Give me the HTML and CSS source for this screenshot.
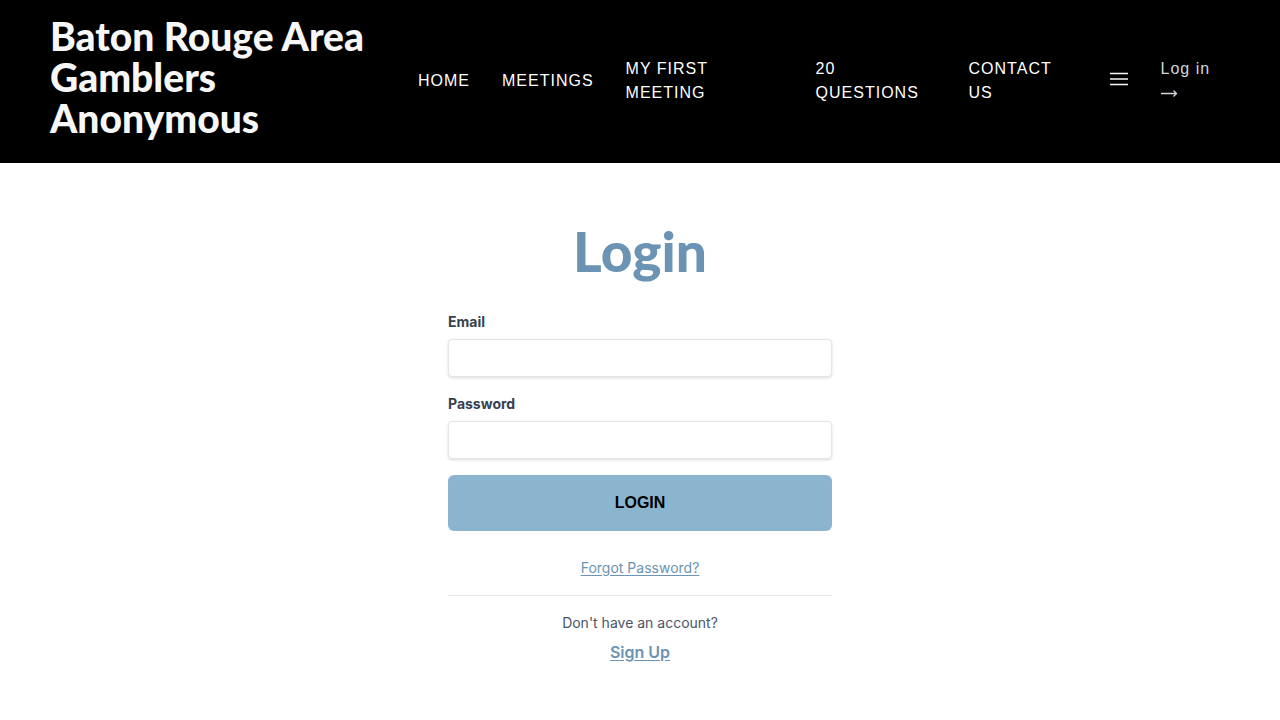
FILE: index.html
```html
<!DOCTYPE html>
<html lang="en">
<head>
<meta charset="utf-8">
<meta name="viewport" content="width=device-width, initial-scale=1">
<title>Login</title>
<link rel="stylesheet" href="styles.css">
</head>
<body>
<header class="header">
  <a class="brand" href="#">Baton Rouge Area Gamblers Anonymous</a>
  <nav class="nav">
    <a class="nav-link" href="#">HOME</a>
    <a class="nav-link" href="#">MEETINGS</a>
    <a class="nav-link nav-wide" href="#">MY FIRST MEETING</a>
    <a class="nav-link nav-medium" href="#">20 QUESTIONS</a>
    <a class="nav-link nav-narrow" href="#">CONTACT US</a>
    <button class="menu" type="button" aria-label="More pages">
      <svg width="20" height="14" viewBox="0 0 20 14" fill="none" stroke="currentColor" stroke-width="1.5"><path d="M1 1.5h18M1 7h18M1 12.5h18"/></svg>
    </button>
    <a class="nav-link login-link" href="#"><span>Log in</span>
      <svg width="17" height="24" viewBox="0 0 17 24" fill="none" stroke="currentColor" stroke-width="1.3" aria-hidden="true"><path d="M0 12.5h15.5M12.5 9.5l3 3-3 3"/></svg></a>
  </nav>
</header>
<main class="main">
  <h1 class="title">Login</h1>
  <form class="form">
    <label class="label" for="email">Email</label>
    <input class="input" id="email" type="email">
    <label class="label" for="password">Password</label>
    <input class="input" id="password" type="password">
    <button class="submit" type="submit">LOGIN</button>
  </form>
  <p class="forgot"><a class="link" href="#">Forgot Password?</a></p>
  <section class="signup">
    <p class="question">Don't have an account?</p>
    <a class="link signup-link" href="#">Sign Up</a>
  </section>
</main>
</body>
</html>
```
FILE: styles.css
```css
* { box-sizing: border-box; }
body {
  margin: 0;
  background: #fff;
  color: #4a5568;
  font-family: Inter, "Liberation Sans", sans-serif;
  font-size: 16px;
  line-height: 24px;
}
.header {
  display: flex;
  align-items: center;
  gap: 32px;
  padding: 16px 50px 18px;
  background: #000;
}
.brand {
  flex: 0 1 336px;
  padding-bottom: 6px;
  color: #f7f7f7;
  font: 900 39px/41px Lato, sans-serif;
  text-decoration: none;
}
.nav {
  display: flex;
  flex: 1;
  align-items: center;
  gap: 32px;
}
.nav-link {
  color: #fff;
  font-family: "Liberation Sans", Arial, sans-serif;
  letter-spacing: 1px;
  text-decoration: none;
}
.nav-wide { flex: 0 1 158px; }
.nav-medium { flex: 0 1 121px; }
.nav-narrow { flex: 0 1 108px; }
.menu {
  display: flex;
  padding: 0 0 4px;
  border: 0;
  background: none;
  color: #f7f7f7;
}
.login-link {
  display: flex;
  flex-direction: column;
  color: #d2d6dc;
}
.main {
  width: 100%;
  max-width: 384px;
  margin: 0 auto;
  padding: 56px 0;
}
.title {
  margin: 0 0 29px;
  color: #6b93b3;
  font: 900 55px/64px Lato, sans-serif;
  text-align: center;
}
.form { display: flex; flex-direction: column; }
.label {
  margin-bottom: 7px;
  color: #374151;
  font-size: 14px;
  font-weight: 700;
  line-height: 20px;
}
.input {
  height: 38px;
  margin-bottom: 17px;
  padding: 8px 12px;
  border: 1px solid #e5e5e5;
  border-radius: 4px;
  background: #fff;
  box-shadow: 0 1px 3px rgba(0, 0, 0, .15);
  font: inherit;
}
.submit {
  height: 56px;
  margin-top: -1px;
  padding: 0;
  border: 0;
  border-radius: 6px;
  background: #8bb5cf;
  color: #000;
  font: bold 16px/24px "Liberation Sans", Arial, sans-serif;
}
.forgot {
  margin: 0;
  padding: 27px 0 17px;
  border-bottom: 1px solid #e5e5e5;
  font-size: 14px;
  line-height: 20px;
  text-align: center;
}
.link {
  color: #6b93b3;
  text-decoration: underline;
  text-underline-offset: 2px;
  text-decoration-skip-ink: auto;
}
.signup { padding-top: 17px; text-align: center; }
.question { margin: 0 0 7px; font-size: 14px; line-height: 20px; }
.signup-link { font-weight: 600; }
```
